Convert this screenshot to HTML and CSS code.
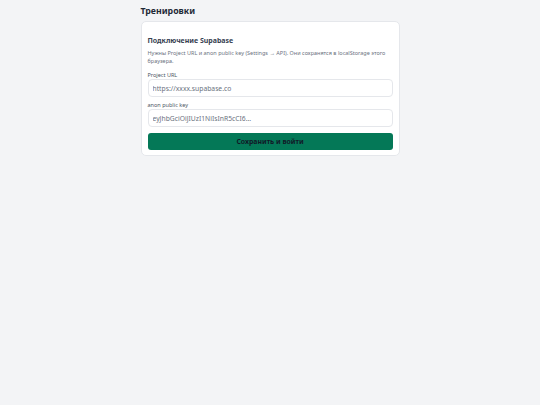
FILE: index.html
```html
<!DOCTYPE html>
<html lang="ru">
<head>
<meta charset="utf-8">
<link rel="stylesheet" href="styles.css">
</head>
<body>
<div class="wrap">
  <h1 class="title">Тренировки</h1>
  <div class="card">
    <h2 class="card-title">Подключение Supabase</h2>
    <p class="desc">Нужны Project URL и anon public key (Settings → API). Они сохранятся в localStorage этого браузера.</p>
    <label class="label">Project URL</label>
    <input class="input" placeholder="https://xxxx.supabase.co">
    <label class="label">anon public key</label>
    <input class="input" placeholder="eyJhbGciOiJIUzI1NiIsInR5cCI6...">
    <button class="btn">Сохранить и войти</button>
  </div>
</div>
</body>
</html>
```
FILE: styles.css
```css
html, body { margin: 0; padding: 0; background: #f3f4f6; }
body { font-family: "Noto Sans", "Open Sans", sans-serif; color: #111827; }
.wrap { width: 259px; margin: 0 auto; padding-top: 4px; }
.title { font-size: 8.75px; font-weight: 700; margin: 0 0 3px; line-height: 14px; color: #1f2937; }
.card { background: #fff; border: 1px solid #e5e7eb; border-radius: 5px; padding: 11px 6px 5px; display: flex; flex-direction: column; }
.card-title { font-size: 7px; font-weight: 700; color: #374151; margin: 2px 0 2px; line-height: 12px; }
.desc { font-size: 5.5px; color: #6b7280; margin: 0 0 6px; line-height: 8px; }
.label { font-size: 5.5px; color: #4b5563; line-height: 8px; margin-bottom: 0; }
.input { font-family: inherit; font-size: 6.75px; height: 18px; box-sizing: border-box; border: 1px solid #e5e7eb; border-radius: 4px; padding: 0 4px; margin: 0 0 4px; background: #fff; }
.input::placeholder { color: #6b7280; }
.btn { font-family: inherit; font-size: 6.9px; font-weight: 700; height: 17px; border: 0; border-radius: 3px; background: #047857; color: #111827; margin-top: 2px; }
```
